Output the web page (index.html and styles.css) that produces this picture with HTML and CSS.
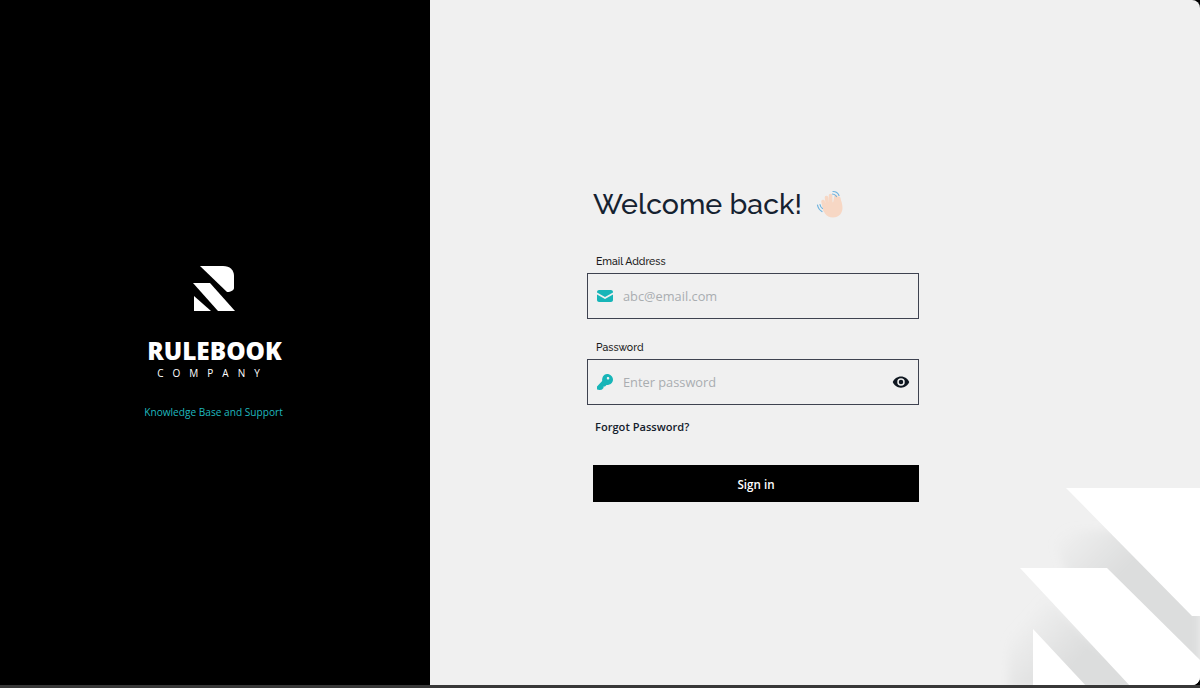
FILE: index.html
```html
<!DOCTYPE html>
<html lang="en">
<head>
<meta charset="utf-8">
<title>Rulebook Company - Sign in</title>
<link rel="stylesheet" href="styles.css">
</head>
<body>
<main class="page">
  <aside class="brand">
    <svg class="brand-logo" viewBox="0 0 44 45" aria-hidden="true">
      <path d="M7 0H30C37 0 41 4 41 10V22C41 24 38 26 34 26Z" fill="#fff"/>
      <path d="M0 17H17L42 45H25Z" fill="#fff"/>
      <path d="M1 30L18 45H1Z" fill="#fff"/>
    </svg>
    <div class="brand-name">RULEBOOK</div>
    <div class="brand-sub">COMPANY</div>
    <div class="brand-tag">Knowledge Base and Support</div>
  </aside>
  <section class="panel">
    <svg class="decor" viewBox="0 0 200 218" aria-hidden="true">
      <defs>
        <linearGradient id="fadeA" gradientUnits="userSpaceOnUse" x1="62" y1="62" x2="112" y2="112">
          <stop offset="0" stop-color="#dcdddd" stop-opacity="0"/>
          <stop offset="1" stop-color="#dcdddd"/>
        </linearGradient>
        <linearGradient id="fadeB" gradientUnits="userSpaceOnUse" x1="22" y1="150" x2="72" y2="195">
          <stop offset="0" stop-color="#dcdddd" stop-opacity="0"/>
          <stop offset="1" stop-color="#dcdddd"/>
        </linearGradient>
        <filter id="soft" x="-20%" y="-20%" width="140%" height="140%">
          <feGaussianBlur stdDeviation="4"/>
        </filter>
      </defs>
      <path d="M50 60L120 60L200 140V218H110Z" fill="url(#fadeA)" filter="url(#soft)"/>
      <path d="M8 90L140 218H8Z" fill="url(#fadeB)" filter="url(#soft)"/>
      <path d="M66 18H200V146H192Z" fill="#fff"/>
      <path d="M20 98H107L200 190V218H132Z" fill="#fff"/>
      <path d="M33 159L88 218H33Z" fill="#fff"/>
    </svg>
    <form class="login">
      <h1 class="title">Welcome back!
        <svg class="wave" viewBox="0 0 28 28" aria-hidden="true">
          <g fill="none" stroke-linecap="round">
            <path d="M9 20L7 11.5M12 19L10.5 7.5M15 18L14.5 5.5M18 18L20 6.5" stroke="#f7d7c4" stroke-width="3.6"/>
            <path d="M1.5 15C2 18 3.5 20 6 21.5M4 14.5C4.3 16.300 5 17.500 6.500 18.500" stroke="#6fb3de" stroke-width="1.200"/>
            <path d="M17 1.500C20 1.500 22 3 23 5.500M16.500 4C18.500 4 19.500 5 20.500 6.500" stroke="#6fb3de" stroke-width="1.200"/>
          </g>
          <path d="M7 15C6 21 10 27.500 17 27.500C23 27.500 26.500 23 26.500 18C26.500 13 25 11 24.500 8C24 6 21 6 20.500 8.500L19.500 12L9 13Z" fill="#f7d7c4"/>
        </svg>
      </h1>
      <label class="label" for="email">Email Address</label>
      <div class="field">
        <svg class="ico" viewBox="0 0 16 12" aria-hidden="true">
          <path d="M2 0H14C15 0 16 .8 16 2V2.600L8 7 0 2.600V2C0 .8 1 0 2 0ZM0 4.500L8 9 16 4.500V10C16 11.200 15 12 14 12H2C1 12 0 11.200 0 10Z" fill="#17b5b8"/>
        </svg>
        <input id="email" class="input" type="text" placeholder="abc@email.com">
      </div>
      <label class="label label-pass" for="password">Password</label>
      <div class="field">
        <svg class="ico ico-key" viewBox="0 0 16 16" aria-hidden="true">
          <path d="M10 0C13.300 0 16 2.500 16 5.500C16 8.800 13.200 11 10 11H9.500L8 12.500H6.500V14L5 15.500C4.500 16 1.500 16 .8 15.800C0 15.500 0 15 0 14V12.500L5.200 7C4.800 3 7 0 10 0ZM11 3C10.200 3 9.800 3.600 9.800 4.200C9.800 5 10.400 5.500 11 5.500C11.800 5.500 12.300 4.900 12.300 4.200C12.300 3.500 11.700 3 11 3Z" fill="#17b5b8" fill-rule="evenodd"/>
        </svg>
        <input id="password" class="input" type="password" placeholder="Enter password">
        <svg class="eye" viewBox="0 0 24 24" aria-hidden="true">
          <path d="M12,9A3,3 0 0,0 9,12A3,3 0 0,0 12,15A3,3 0 0,0 15,12A3,3 0 0,0 12,9M12,17A5,5 0 0,1 7,12A5,5 0 0,1 12,7A5,5 0 0,1 17,12A5,5 0 0,1 12,17M12,4.500C7,4.500 2.730,7.610 1,12C2.730,16.390 7,19.500 12,19.500C17,19.500 21.270,16.390 23,12C21.270,7.610 17,4.500 12,4.500Z" fill="#0f1720"/>
        </svg>
      </div>
      <a class="forgot" href="#">Forgot Password?</a>
      <button class="submit" type="button">Sign in</button>
    </form>
  </section>
</main>
<div class="strip"></div>
</body>
</html>
```
FILE: styles.css
```css
* { box-sizing: border-box; }
html, body { margin: 0; height: 688px; overflow: hidden; }
body { background: #333; font-family: "Open Sans", sans-serif; display: flex; flex-direction: column; }
.page { display: flex; height: 685px; background: #000; }
.strip { height: 3px; background: #383838; }

.brand { width: 430px; background: #000; display: flex; flex-direction: column; align-items: center; padding: 266px 1px 0 0; flex: none; }
.brand-logo { width: 44px; height: 45px; display: block; }
.brand-name { margin-top: 25px; font: 800 24.400px/30px "Open Sans", sans-serif; color: #fff; }
.brand-sub { margin-top: 0; font: 400 10px/15px "Open Sans", sans-serif; letter-spacing: 9px; color: #fff; margin-right: 3px; }
.brand-tag { margin-top: 24px; font: 400 10.150px/15px "Open Sans", sans-serif; color: #1fb8bf; margin-right: 2px; }

.panel { position: relative; flex: 1; background: #f0f0f0; border-radius: 0 8px 8px 0; overflow: hidden; padding: 184px 0 0 157px; }
.decor { position: absolute; right: 0; bottom: -3px; width: 200px; height: 218px; }
.login { position: relative; width: 332px; display: flex; flex-direction: column; }
.title { margin: 0 0 0 6px; display: flex; align-items: center; gap: 14px; height: 40px; font: 500 28.600px/40px "Raleway", "Inter", "Noto Sans", sans-serif; color: #152230; white-space: nowrap; }
.wave { width: 28px; height: 28px; flex: none; }
.label { margin: 30px 0 0 9px; height: 19px; font: 500 10.500px/15px "Raleway", sans-serif; color: #1a1a1a; }
.label-pass { margin-top: 21px; }
.field { height: 46px; border: 1px solid #3e4250; display: flex; align-items: center; padding: 0 8px 0 9px; }
.ico { width: 16px; height: 12px; flex: none; }
.ico-key { height: 16px; }
.input { flex: 1; min-width: 0; margin-left: 10px; border: 0; outline: 0; background: transparent; padding: 0; font: 400 12.800px/20px "Open Sans", sans-serif; color: #333; }
.input::placeholder { color: #a9adb0; opacity: 1; }
.eye { width: 18px; height: 18px; flex: none; }
.forgot { margin: 13px 0 0 8px; height: 18px; font: 600 11.100px/18px "Open Sans", sans-serif; color: #14202c; text-decoration: none; }
.submit { margin: 29px 0 0 6px; height: 37px; border: 0; background: #000; color: #fff; font: 600 11.600px/39px "Open Sans", sans-serif; padding: 0; }
```
